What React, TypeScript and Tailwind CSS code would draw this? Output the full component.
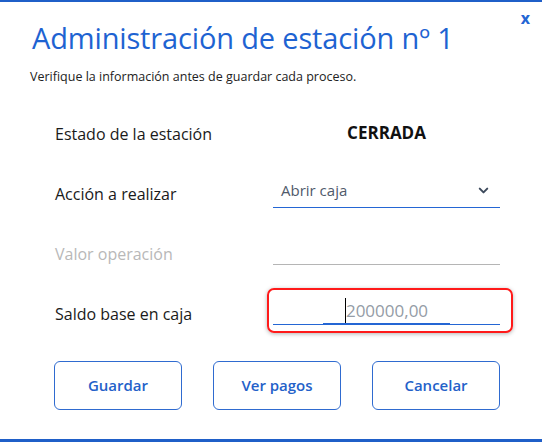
import { ChevronDown } from "lucide-react";

const font = "font-['Segoe_UI','Open_Sans',sans-serif]";

const buttons = ["Guardar", "Ver pagos", "Cancelar"];

export default function App() {
  return (
    <div
      className={`relative w-[542px] h-[442px] bg-white border-t-2 border-b-[3px] border-[#1f5fc8] ${font} flex flex-col`}
    >
      <button className="absolute top-[6px] right-[12px] text-[16px] font-bold text-[#2466d4] leading-[20px]">
        x
      </button>

      <h1 className="mt-[18px] ml-[32px] text-[29px] tracking-[-0.15px] leading-[36px] text-[#1e63d2]">
        Administración de estación nº 1
      </h1>
      <p className="mt-[12px] ml-[30px] text-[12.5px] leading-[18px] text-[#222]">
        Verifique la información antes de guardar cada proceso.
      </p>

      <div className="mt-[18px] ml-[55px] mr-[42px] flex flex-col">
        <div className="h-[60px] flex items-center">
          <span className="w-[218px] text-[16px] text-[#1a1a1a]">Estado de la estación</span>
          <span className="flex-1 text-center text-[17px] font-bold text-[#111] -mt-[3px]">CERRADA</span>
        </div>

        <div className="h-[60px] flex items-center">
          <span className="w-[218px] text-[16px] text-[#1a1a1a]">Acción a realizar</span>
          <div className="flex-1 h-[28px] mt-[0px] border-b border-[#2466d4] flex items-start justify-between pl-[8px] pr-[9px]">
            <span className="text-[15px] leading-[20px] text-[#505a6b]">Abrir caja</span>
            <ChevronDown size={15} strokeWidth={3.2} className="mt-[3px] text-[#3d4a5c]" />
          </div>
        </div>

        <div className="h-[60px] flex items-center">
          <span className="w-[218px] text-[16px] text-[#b8b8b8]">Valor operación</span>
          <div className="flex-1 h-[22px] border-b border-[#b5b5b5]" />
        </div>

        <div className="h-[60px] flex items-center">
          <span className="w-[218px] text-[16px] text-[#1a1a1a]">Saldo base en caja</span>
          <div className="-ml-[6px] -mr-[13px] mb-[7px] flex-1 h-[45px] border-2 border-[#ff1a1a] rounded-[7px] shadow-[0_1px_4px_rgba(0,0,0,0.3)] pl-[4px] pr-[11px] pb-[6px]">
            <div className="h-full border-b border-[#2466d4] flex flex-col justify-end items-center">
              <div className="h-[25px] flex items-stretch">
                <div className="w-px bg-black" />
                <span className="text-[17px] leading-[25px] text-[#949ca6]">200000,00</span>
              </div>
              <div className="w-[127px] h-[2px] bg-[#2466d4] -mb-[1px]" />
            </div>
          </div>
        </div>
      </div>

      <div className="mt-[17px] ml-[54px] flex gap-[31px]">
        {buttons.map((b) => (
          <button
            key={b}
            className="w-[128px] h-[49px] rounded-[6px] border border-[#2f6bd0] text-[15px] font-semibold text-[#2461c9]"
          >
            {b}
          </button>
        ))}
      </div>
    </div>
  );
}
